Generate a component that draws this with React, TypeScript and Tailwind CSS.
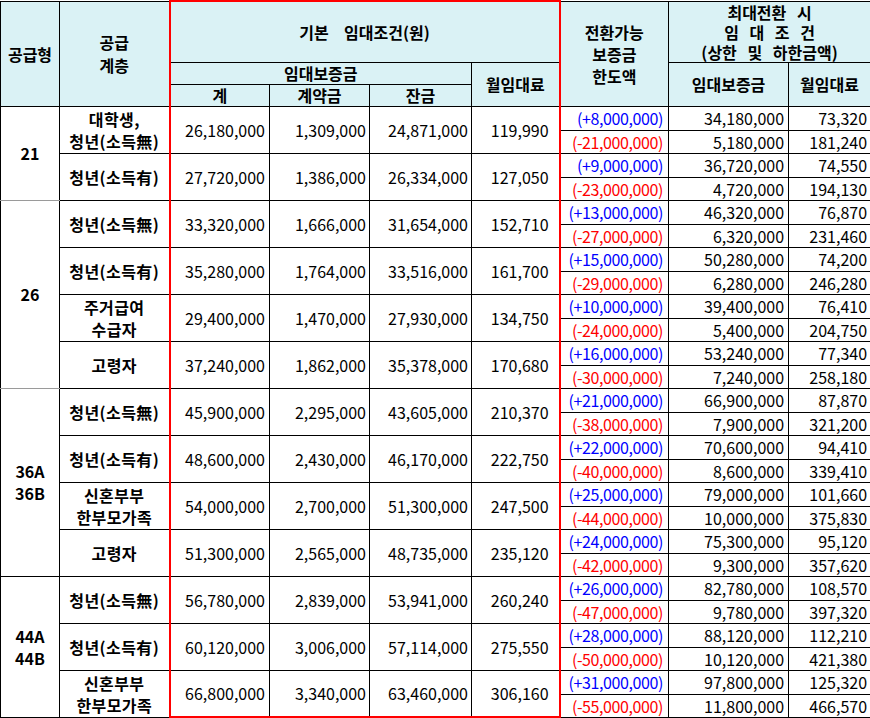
type Row = {
  label: string[];
  total: string;
  deposit: string;
  balance: string;
  rent: string;
  up: [string, string, string];
  down: [string, string, string];
};

type Group = { name: string[]; rows: Row[] };

const groups: Group[] = [
  {
    name: ["21"],
    rows: [
      { label: ["대학생,", "청년(소득無)"], total: "26,180,000", deposit: "1,309,000", balance: "24,871,000", rent: "119,990", up: ["(+8,000,000)", "34,180,000", "73,320"], down: ["(-21,000,000)", "5,180,000", "181,240"] },
      { label: ["청년(소득有)"], total: "27,720,000", deposit: "1,386,000", balance: "26,334,000", rent: "127,050", up: ["(+9,000,000)", "36,720,000", "74,550"], down: ["(-23,000,000)", "4,720,000", "194,130"] },
    ],
  },
  {
    name: ["26"],
    rows: [
      { label: ["청년(소득無)"], total: "33,320,000", deposit: "1,666,000", balance: "31,654,000", rent: "152,710", up: ["(+13,000,000)", "46,320,000", "76,870"], down: ["(-27,000,000)", "6,320,000", "231,460"] },
      { label: ["청년(소득有)"], total: "35,280,000", deposit: "1,764,000", balance: "33,516,000", rent: "161,700", up: ["(+15,000,000)", "50,280,000", "74,200"], down: ["(-29,000,000)", "6,280,000", "246,280"] },
      { label: ["주거급여", "수급자"], total: "29,400,000", deposit: "1,470,000", balance: "27,930,000", rent: "134,750", up: ["(+10,000,000)", "39,400,000", "76,410"], down: ["(-24,000,000)", "5,400,000", "204,750"] },
      { label: ["고령자"], total: "37,240,000", deposit: "1,862,000", balance: "35,378,000", rent: "170,680", up: ["(+16,000,000)", "53,240,000", "77,340"], down: ["(-30,000,000)", "7,240,000", "258,180"] },
    ],
  },
  {
    name: ["36A", "36B"],
    rows: [
      { label: ["청년(소득無)"], total: "45,900,000", deposit: "2,295,000", balance: "43,605,000", rent: "210,370", up: ["(+21,000,000)", "66,900,000", "87,870"], down: ["(-38,000,000)", "7,900,000", "321,200"] },
      { label: ["청년(소득有)"], total: "48,600,000", deposit: "2,430,000", balance: "46,170,000", rent: "222,750", up: ["(+22,000,000)", "70,600,000", "94,410"], down: ["(-40,000,000)", "8,600,000", "339,410"] },
      { label: ["신혼부부", "한부모가족"], total: "54,000,000", deposit: "2,700,000", balance: "51,300,000", rent: "247,500", up: ["(+25,000,000)", "79,000,000", "101,660"], down: ["(-44,000,000)", "10,000,000", "375,830"] },
      { label: ["고령자"], total: "51,300,000", deposit: "2,565,000", balance: "48,735,000", rent: "235,120", up: ["(+24,000,000)", "75,300,000", "95,120"], down: ["(-42,000,000)", "9,300,000", "357,620"] },
    ],
  },
  {
    name: ["44A", "44B"],
    rows: [
      { label: ["청년(소득無)"], total: "56,780,000", deposit: "2,839,000", balance: "53,941,000", rent: "260,240", up: ["(+26,000,000)", "82,780,000", "108,570"], down: ["(-47,000,000)", "9,780,000", "397,320"] },
      { label: ["청년(소득有)"], total: "60,120,000", deposit: "3,006,000", balance: "57,114,000", rent: "275,550", up: ["(+28,000,000)", "88,120,000", "112,210"], down: ["(-50,000,000)", "10,120,000", "421,380"] },
      { label: ["신혼부부", "한부모가족"], total: "66,800,000", deposit: "3,340,000", balance: "63,460,000", rent: "306,160", up: ["(+31,000,000)", "97,800,000", "125,320"], down: ["(-55,000,000)", "11,800,000", "466,570"] },
    ],
  },
];

const th = "border border-black bg-[#daf2f5] p-0 text-center align-middle font-bold text-[16px] leading-[20px]";
const td = "border border-black p-0 align-middle text-[16px]";

export default function App() {
  return (
    <div className="bg-white font-['Noto_Sans_CJK_KR',sans-serif] text-black">
      <table className="w-[870px] table-fixed border-collapse">
        <colgroup>
          <col className="w-[59px]" />
          <col className="w-[110px]" />
          <col className="w-[100px]" />
          <col className="w-[100px]" />
          <col className="w-[102px]" />
          <col className="w-[88px]" />
          <col className="w-[109px]" />
          <col className="w-[120px]" />
          <col className="w-[82px]" />
        </colgroup>
        <thead>
          <tr className="h-[60px]">
            <th rowSpan={3} className={th}>공급형</th>
            <th rowSpan={3} className={`${th} leading-[23px]`}>
              공급
              <br />
              계층
            </th>
            <th colSpan={4} className={`${th} border-x-2 border-t-2 border-x-[#ff0000] border-t-[#ff0000] whitespace-pre [word-spacing:4px]`}>
              {"기본  임대조건(원)"}
            </th>
            <th rowSpan={3} className={`${th} border-l-2 border-l-[#ff0000] leading-[22px]`}>
              전환가능
              <br />
              보증금
              <br />
              한도액
            </th>
            <th colSpan={2} className={`${th} text-[15px] leading-[19.5px] whitespace-pre [word-spacing:7px]`}>
              {"최대전환 시"}
              <br />
              {"임 대 조 건"}
              <br />
              {"(상한 및 하한금액)"}
            </th>
          </tr>
          <tr className="h-[22px]">
            <th colSpan={3} className={`${th} border-l-2 border-l-[#ff0000]`}>임대보증금</th>
            <th rowSpan={2} className={`${th} border-r-2 border-r-[#ff0000]`}>월임대료</th>
            <th rowSpan={2} className={th}>임대보증금</th>
            <th rowSpan={2} className={th}>월임대료</th>
          </tr>
          <tr className="h-[22px]">
            <th className={`${th} border-l-2 border-l-[#ff0000]`}>계</th>
            <th className={th}>계약금</th>
            <th className={th}>잔금</th>
          </tr>
        </thead>
        <tbody>
          {groups.map((g, gi) =>
            g.rows.map((r, ri) => {
              const lastRow = gi === groups.length - 1 && ri === g.rows.length - 1;
              const redBottom = lastRow ? "border-b-2 border-b-[#ff0000]" : "";
              return [
                <tr key={`${gi}-${ri}-a`} className="h-[24px]">
                  {ri === 0 && (
                    <td
                      rowSpan={g.rows.length * 2}
                      className={`${td} text-center font-bold leading-[22px] ${gi < 2 ? "border-b-[#9a9a9a]" : ""}`}
                    >
                      {g.name.map((n) => (
                        <div key={n}>{n}</div>
                      ))}
                    </td>
                  )}
                  <td rowSpan={2} className={`${td} text-center font-bold leading-[22px] tracking-[0.4px]`}>
                    {r.label.map((l) => (
                      <div key={l}>{l}</div>
                    ))}
                  </td>
                  <td rowSpan={2} className={`${td} border-l-2 border-l-[#ff0000] pr-[4px] text-right ${redBottom}`}>{r.total}</td>
                  <td rowSpan={2} className={`${td} pr-[3px] text-right ${redBottom}`}>{r.deposit}</td>
                  <td rowSpan={2} className={`${td} pr-[3px] text-right ${redBottom}`}>{r.balance}</td>
                  <td rowSpan={2} className={`${td} border-r-2 border-r-[#ff0000] pr-[10px] text-right ${redBottom}`}>{r.rent}</td>
                  <td className={`${td} border-b-dotted pr-[5px] text-right leading-[22px] tracking-[-0.4px] text-[#0000ff]`}>{r.up[0]}</td>
                  <td className={`${td} border-b-dotted pr-[4px] text-right leading-[22px]`}>{r.up[1]}</td>
                  <td className={`${td} border-b-dotted pr-[3px] text-right leading-[22px]`}>{r.up[2]}</td>
                </tr>,
                <tr key={`${gi}-${ri}-b`} className="h-[23px]">
                  <td className={`${td} border-t-dotted pr-[5px] text-right leading-[22px] tracking-[-0.4px] text-[#ff0000]`}>{r.down[0]}</td>
                  <td className={`${td} border-t-dotted pr-[4px] text-right leading-[22px]`}>{r.down[1]}</td>
                  <td className={`${td} border-t-dotted pr-[3px] text-right leading-[22px]`}>{r.down[2]}</td>
                </tr>,
              ];
            })
          )}
        </tbody>
      </table>
    </div>
  );
}
